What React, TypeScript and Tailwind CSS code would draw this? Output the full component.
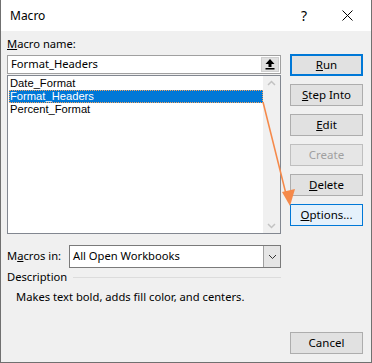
import React from 'react';

const font = { fontFamily: '"Segoe UI", "Noto Sans", sans-serif' };
const listFont = { fontFamily: '"Liberation Sans", Arial, sans-serif' };

function Btn({ children, kind = 'normal' }: { children: React.ReactNode; kind?: 'normal' | 'default' | 'hover' | 'disabled' }) {
  const cls =
    kind === 'default'
      ? 'border-2 border-[#0078d7] bg-[#e1e1e1] text-black'
      : kind === 'hover'
      ? 'border border-[#0078d7] bg-[#e5f1fb] text-black'
      : kind === 'disabled'
      ? 'border border-[#bfbfbf] bg-[#e6e6e6] text-[#a0a0a0]'
      : 'border border-[#adadad] bg-[#e1e1e1] text-black';
  return (
    <div className={`h-[22px] w-[73px] flex items-center justify-center text-[11.5px] leading-none ${cls}`}>
      {children}
    </div>
  );
}

export default function App() {
  return (
    <div className="relative w-[372px] h-[363px] bg-[#f0f0f0] border-x border-b border-[#707070] flex flex-col text-[11.2px] text-black" style={font}>
      {/* title bar */}
      <div className="h-[31px] bg-white flex items-center pl-[9px] text-[12px]">
        <span className="flex-1">Macro</span>
        <span className="w-[20px] text-center text-[14px] mr-[28px]">?</span>
        <svg width="11" height="11" viewBox="0 0 11 11" className="mr-[18px]">
          <path d="M0.5 0.5 L10.5 10.5 M10.5 0.5 L0.5 10.5" stroke="#000" strokeWidth="1" />
        </svg>
      </div>

      <div className="flex-1 flex pl-[6px] pr-[7px] pb-[8px]">
        {/* left column */}
        <div className="w-[274px] flex flex-col">
          <div className="h-[16px] mt-[5px] mb-[3px] leading-[16px]">
            <span className="underline">M</span>acro name:
          </div>
          <div className="h-[19px] border border-[#a0a0a0] bg-white flex items-center">
            <span className="flex-1 pl-[3px]">Format_Headers</span>
            <div className="w-[18px] h-[15px] mr-[1px] bg-[#e1e1e1] border border-[#cfcfcf] flex items-center justify-center">
              <svg width="10" height="11" viewBox="0 0 10 11">
                <path d="M5 0 L9.5 5 L6.5 5 L6.5 8 L3.5 8 L3.5 5 L0.5 5 Z" fill="#000" />
                <rect x="0.5" y="9" width="9" height="1.5" fill="#000" />
              </svg>
            </div>
          </div>
          <div className="mt-[1px] h-[159px] border border-[#828790] bg-white flex">
            <div className="flex-1 pt-[1px] pl-[1px] text-[11.2px] leading-[13px]" style={listFont}>
              <div className="h-[13px] pl-[1px]">Date_Format</div>
              <div className="h-[13px] pl-[1px] bg-[#0078d7] text-white outline outline-1 outline-dotted outline-[#f5a25d] -outline-offset-1">
                Format_Headers
              </div>
              <div className="h-[13px] pl-[1px]">Percent_Format</div>
            </div>
            <div className="w-[17px] bg-[#f0f0f0] flex flex-col justify-between items-center py-[4px]">
              <svg width="9" height="6" viewBox="0 0 9 6">
                <path d="M1 5 L4.5 1.5 L8 5" stroke="#c2c2c2" strokeWidth="1.5" fill="none" />
              </svg>
              <svg width="9" height="6" viewBox="0 0 9 6">
                <path d="M1 1 L4.5 4.5 L8 1" stroke="#c2c2c2" strokeWidth="1.5" fill="none" />
              </svg>
            </div>
          </div>

          <div className="mt-[11px] flex items-center h-[23px]">
            <span className="w-[62px]">
              M<span className="underline">a</span>cros in:
            </span>
            <div className="flex-1 h-[23px] border border-[#7a7a7a] bg-white flex items-center">
              <span className="flex-1 pl-[3px]">All Open Workbooks</span>
              <div className="w-[17px] h-full bg-[#e5e5e5] border-l border-[#a0a0a0] flex items-center justify-center">
                <svg width="9" height="6" viewBox="0 0 9 6">
                  <path d="M1 1 L4.5 4.5 L8 1" stroke="#333" strokeWidth="1" fill="none" />
                </svg>
              </div>
            </div>
          </div>

          <div className="mt-[1px] h-[16px] flex items-center">
            <span className="pr-[6px]">Description</span>
            <div className="flex-1 h-px bg-[#dcdcdc]" />
          </div>
          <div className="mt-[4px] pl-[9px] leading-[16px] whitespace-nowrap">
            Makes text bold, adds fill color, and centers.
          </div>
        </div>

        {/* right column */}
        <div className="ml-[9px] flex flex-col justify-between pt-[23px]">
          <div className="flex flex-col gap-[8px]">
            <Btn kind="default">
              <span><span className="underline">R</span>un</span>
            </Btn>
            <Btn>
              <span><span className="underline">S</span>tep Into</span>
            </Btn>
            <Btn>
              <span><span className="underline">E</span>dit</span>
            </Btn>
            <Btn kind="disabled">Create</Btn>
            <Btn>
              <span><span className="underline">D</span>elete</span>
            </Btn>
            <Btn kind="hover">
              <span><span className="underline">O</span>ptions...</span>
            </Btn>
          </div>
          <Btn>Cancel</Btn>
        </div>
      </div>

      {/* annotation arrow */}
      <svg className="absolute left-0 top-0 pointer-events-none" width="372" height="363">
        <line x1="262" y1="102" x2="285" y2="194" stroke="#f5894a" strokeWidth="1.6" />
        <path d="M281 192 L294 189 L289 206 Z" fill="#f5894a" />
      </svg>
    </div>
  );
}
